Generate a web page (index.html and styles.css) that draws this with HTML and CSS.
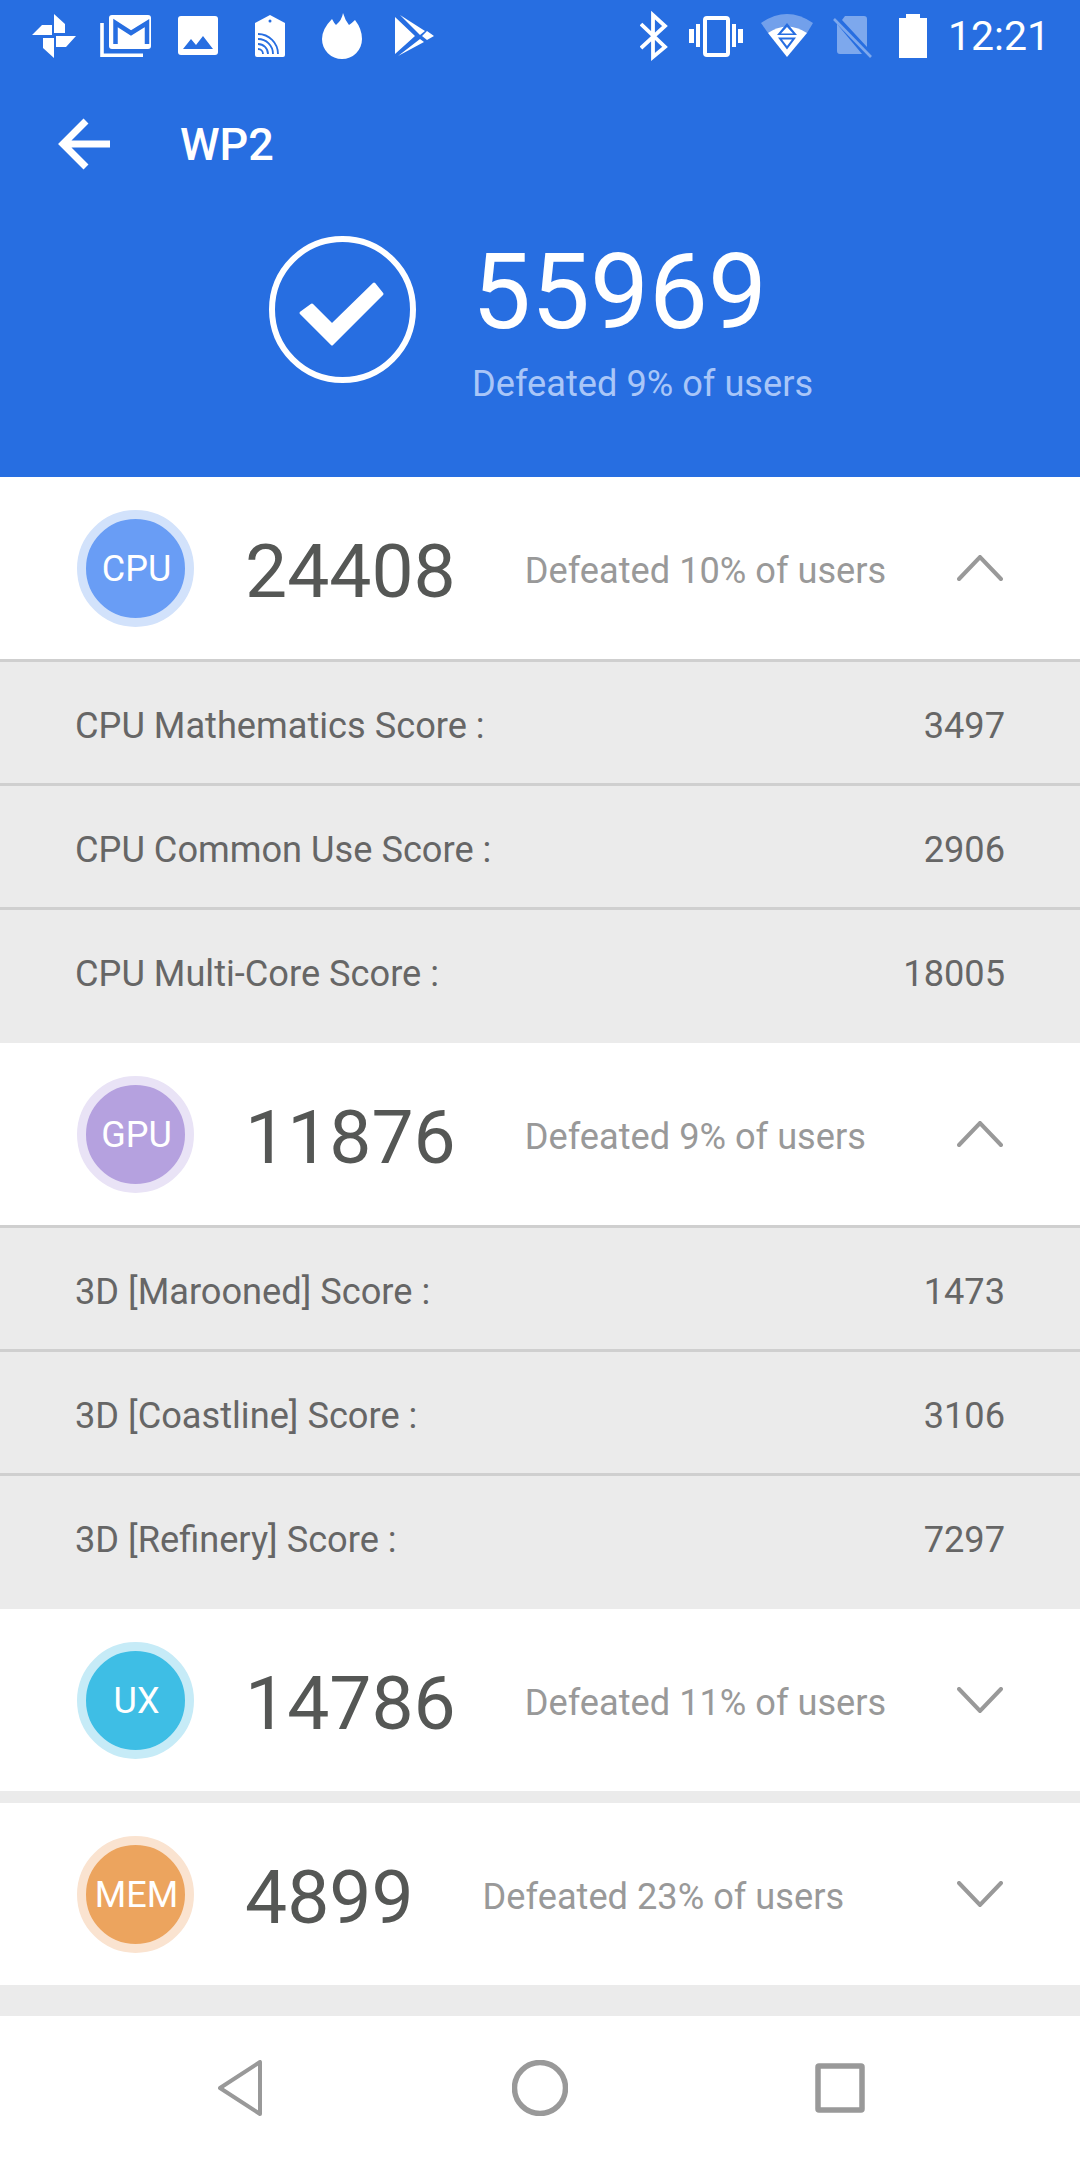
FILE: index.html
```html
<!DOCTYPE html>
<html lang="en">
    <head>
        <meta charset="UTF-8">
        <meta name="viewport" content="width=device-width, initial-scale=1.0">
        <title>WP2</title>
        <link rel="stylesheet" href="styles.css">
    </head>
    <body>
        <div class="header">
            <div class="status-bar">
                <div class="status-left">
                    <svg class="slot" viewBox="18 0 72 72"><path fill="#fff" d="M54 14L65 24V33H54ZM56 36H76L66 47H56ZM43 38H54V58L43 48ZM32 35L42 25H52V35Z"/></svg>
                    <svg class="slot" viewBox="90 0 72 72"><path fill="none" stroke="#fff" stroke-width="3.6" d="M102 23V55.200H143"/><rect x="109" y="15" width="42" height="34" rx="3" fill="#fff"/><path fill="none" stroke="#276ee1" stroke-width="4.500" d="M115.500 44V23L131 33L147 23V44"/></svg>
                    <svg class="slot" viewBox="162 0 72 72"><rect x="178" y="16" width="40" height="39" rx="3" fill="#fff"/><path fill="#276ee1" d="M183 49L191 39L196 45L203 36L213 49Z"/></svg>
                    <svg class="slot" viewBox="234 0 72 72"><path fill="#fff" d="M270 15L285 23V55Q285 57 283 57H257Q255 57 255 55V23Z"/><circle cx="270" cy="21" r="1.500" fill="#276ee1"/><path fill="none" stroke="#276ee1" stroke-width="1.800" d="M258 49A5 5 0 0 1 263 54M258 44A10 10 0 0 1 268 54M258 39A15 15 0 0 1 273 54M258 34A20 20 0 0 1 278 54"/></svg>
                    <svg class="slot" viewBox="306 0 72 72"><path fill="#fff" d="M343 13Q345 20 349 25Q352 23 355 20Q362 29 362 39A20 20 0 0 1 322 39Q322 29 332 19Q334 23 336 25Q342 20 343 13Z"/></svg>
                    <svg class="slot" viewBox="378 0 72 72"><path fill="#fff" d="M395 17L415 36L395 54ZM400 15L425 31L420 35ZM398 56L420 39L424 42ZM422 36L427 31L434 36L427 40Z"/></svg>
                </div>
                <div class="status-right">
                    <svg class="bt" viewBox="640 0 28 72"><path fill="none" stroke="#fff" stroke-width="3.800" d="M641 24L665 47L653 57V15L665 26L641 48"/></svg>
                    <svg class="vibrate" viewBox="689 0 54 72"><rect x="705" y="18" width="23" height="37" rx="2" fill="none" stroke="#fff" stroke-width="4"/><path fill="#fff" d="M689 29H694V43H689ZM696 24H700V47H696ZM732 24H736V47H732ZM738 29H743V43H738Z"/></svg>
                    <svg class="wifi" viewBox="760 0 54 72"><path fill="#fff" opacity="0.35" d="M761 23Q787 5 813 23L807 33H768Z"/><path fill="#fff" d="M768 33Q787 20 807 33L787 57Z"/><path fill="#276ee1" fill-rule="evenodd" d="M787 23L797 35H777ZM787 27L781 33.500H793ZM778 37.500H796L787 49.500ZM782 39.500L787 46L792 39.500Z"/></svg>
                    <svg class="sim" viewBox="833 0 40 72"><path fill="#fff" opacity="0.4" d="M845 16H864Q867 16 867 19V47L842 20ZM837 24L862 54H840Q837 54 837 51Z"/><path fill="none" stroke="#fff" opacity="0.4" stroke-width="2.600" d="M834 19L871 57"/></svg>
                    <svg class="battery" viewBox="899 0 28 72"><path fill="#fff" d="M906 14H920V18H927V58H899V18H906Z"/></svg>
                    <span class="clock">12:21</span>
                </div>
            </div>
            <div class="toolbar">
                <svg class="back" viewBox="0 0 52 52"><path fill="none" stroke="#fff" stroke-width="7" d="M52 26H6M28 3L5 26L28 49"/></svg>
                <span class="toolbar-title">WP2</span>
            </div>
            <div class="total">
                <svg class="total-check" viewBox="0 0 147 147"><circle cx="73.500" cy="73.500" r="70.500" fill="none" stroke="#fff" stroke-width="6"/><path fill="#fff" stroke="#fff" stroke-width="3" stroke-linejoin="round" d="M43 69L63 89L105 48L113 58L63 108L32 77Z"/></svg>
                <div class="total-text">
                    <div class="total-score">55969</div>
                    <div class="total-rank">Defeated 9% of users</div>
                </div>
            </div>
        </div>

        <div class="score-row open">
            <div class="badge badge-cpu">CPU</div>
            <span class="score">24408</span>
            <span class="rank">Defeated 10% of users</span>
            <svg class="chevron" viewBox="0 0 46 26"><path fill="none" stroke="#999" stroke-width="4" stroke-linecap="round" d="M2 24L23 2L44 24"/></svg>
        </div>
        <div class="details">
            <div class="detail"><span>CPU Mathematics Score :</span><span>3497</span></div>
            <div class="detail"><span>CPU Common Use Score :</span><span>2906</span></div>
            <div class="detail last"><span>CPU Multi-Core Score :</span><span>18005</span></div>
        </div>

        <div class="score-row open">
            <div class="badge badge-gpu">GPU</div>
            <span class="score">11876</span>
            <span class="rank">Defeated 9% of users</span>
            <svg class="chevron" viewBox="0 0 46 26"><path fill="none" stroke="#999" stroke-width="4" stroke-linecap="round" d="M2 24L23 2L44 24"/></svg>
        </div>
        <div class="details">
            <div class="detail"><span>3D [Marooned] Score :</span><span>1473</span></div>
            <div class="detail"><span>3D [Coastline] Score :</span><span>3106</span></div>
            <div class="detail last"><span>3D [Refinery] Score :</span><span>7297</span></div>
        </div>

        <div class="score-row">
            <div class="badge badge-ux">UX</div>
            <span class="score">14786</span>
            <span class="rank">Defeated 11% of users</span>
            <svg class="chevron" viewBox="0 0 46 26"><path fill="none" stroke="#999" stroke-width="4" stroke-linecap="round" d="M2 2L23 24L44 2"/></svg>
        </div>
        <div class="score-row mem">
            <div class="badge badge-mem">MEM</div>
            <span class="score">4899</span>
            <span class="rank">Defeated 23% of users</span>
            <svg class="chevron" viewBox="0 0 46 26"><path fill="none" stroke="#999" stroke-width="4" stroke-linecap="round" d="M2 2L23 24L44 2"/></svg>
        </div>

        <div class="nav-bar">
            <svg class="nav-back" viewBox="218 2060 44 56"><path fill="none" stroke="#999" stroke-width="4" stroke-linejoin="round" d="M220 2088L260 2062V2114Z"/></svg>
            <svg class="nav-home" viewBox="0 0 56 56"><circle cx="28" cy="28" r="25.500" fill="none" stroke="#999" stroke-width="5.500"/></svg>
            <svg class="nav-recent" viewBox="0 0 50 50"><rect x="3" y="3" width="44" height="44" rx="1" fill="none" stroke="#999" stroke-width="5.500"/></svg>
        </div>
    </body>
</html>
```

FILE: styles.css
```css
body {
    margin: 0;
    width: 1080px;
    height: 2160px;
    overflow: hidden;
    background-color: #EBEBEB;
    font-family: "Roboto", sans-serif;
}
svg {
    display: block;
    flex-shrink: 0;
}

/* blue top part */
.header {
    height: 477px;
    background-color: #276EE1;
    color: #fff;
}
.status-bar {
    display: flex;
    justify-content: space-between;
    height: 72px;
    padding-left: 18px;
    padding-right: 30px;
}
.status-left {
    display: flex;
}
.status-right {
    display: flex;
    align-items: center;
}
.slot {
    width: 72px;
    height: 72px;
}
.bt {
    width: 28px;
    height: 72px;
    margin-right: 21px;
}
.vibrate {
    width: 54px;
    height: 72px;
    margin-right: 17px;
}
.wifi {
    width: 54px;
    height: 72px;
    margin-right: 19px;
}
.sim {
    width: 40px;
    height: 72px;
    margin-right: 26px;
}
.battery {
    width: 28px;
    height: 72px;
    margin-right: 21px;
}
.clock {
    font-size: 41px;
    line-height: 72px;
}
.toolbar {
    display: flex;
    align-items: center;
    height: 144px;
    padding-left: 58px;
}
.back {
    width: 52px;
    height: 52px;
}
.toolbar-title {
    margin-left: 70px;
    font-size: 45px;
    font-weight: 500;
}
.total {
    display: flex;
    padding-left: 269px;
    padding-top: 20px;
}
.total-check {
    width: 147px;
    height: 147px;
}
.total-text {
    margin-left: 56px;
}
.total-score {
    font-size: 105px;
    line-height: 100px;
    margin-top: 7px;
    margin-left: 0;
}
.total-rank {
    font-size: 36.2px;
    line-height: 44px;
    margin-top: 19px;
    color: #A9C6F8;
}

/* score rows */
.score-row {
    display: flex;
    align-items: center;
    height: 182px;
    padding-left: 77px;
    padding-right: 77px;
    background-color: #fff;
}
.score-row.open {
    border-bottom: 3px solid #CFCFCF;
}
.score-row.mem {
    margin-top: 12px;
}
.badge {
    display: flex;
    align-items: center;
    justify-content: center;
    box-sizing: border-box;
    width: 117px;
    height: 117px;
    padding-top: 2px;
    padding-left: 2px;
    border: 9px solid;
    border-radius: 50%;
    color: #fff;
    font-size: 36px;
}
.badge-cpu {
    background-color: #699DF5;
    border-color: #D2E2FB;
}
.badge-gpu {
    background-color: #B5A1DF;
    border-color: #E9E3F6;
}
.badge-ux {
    background-color: #3EBEE5;
    border-color: #C6EBF7;
}
.badge-mem {
    background-color: #ECA45E;
    border-color: #FAE3D0;
}
.score {
    margin-left: 51px;
    padding-top: 6px;
    font-size: 75px;
    color: #555755;
}
.rank {
    margin-left: 69px;
    padding-top: 4px;
    font-size: 36.2px;
    color: #999;
}
.chevron {
    width: 46px;
    height: 26px;
    margin-left: auto;
}

/* expanded rows */
.detail {
    display: flex;
    justify-content: space-between;
    align-items: center;
    box-sizing: border-box;
    height: 124px;
    padding: 5px 75px 0 75px;
    border-bottom: 3px solid #CFCFCF;
    color: #666;
    font-size: 36.2px;
}
.detail.last {
    height: 133px;
    padding-top: 0;
    padding-bottom: 7px;
    border-bottom: none;
}

/* android buttons */
.nav-bar {
    display: flex;
    align-items: center;
    height: 144px;
    margin-top: 31px;
    padding-left: 218px;
    background-color: #fff;
}
.nav-back {
    width: 44px;
    height: 56px;
}
.nav-home {
    width: 56px;
    height: 56px;
    margin-left: 250px;
}
.nav-recent {
    width: 50px;
    height: 50px;
    margin-left: 247px;
}
```
